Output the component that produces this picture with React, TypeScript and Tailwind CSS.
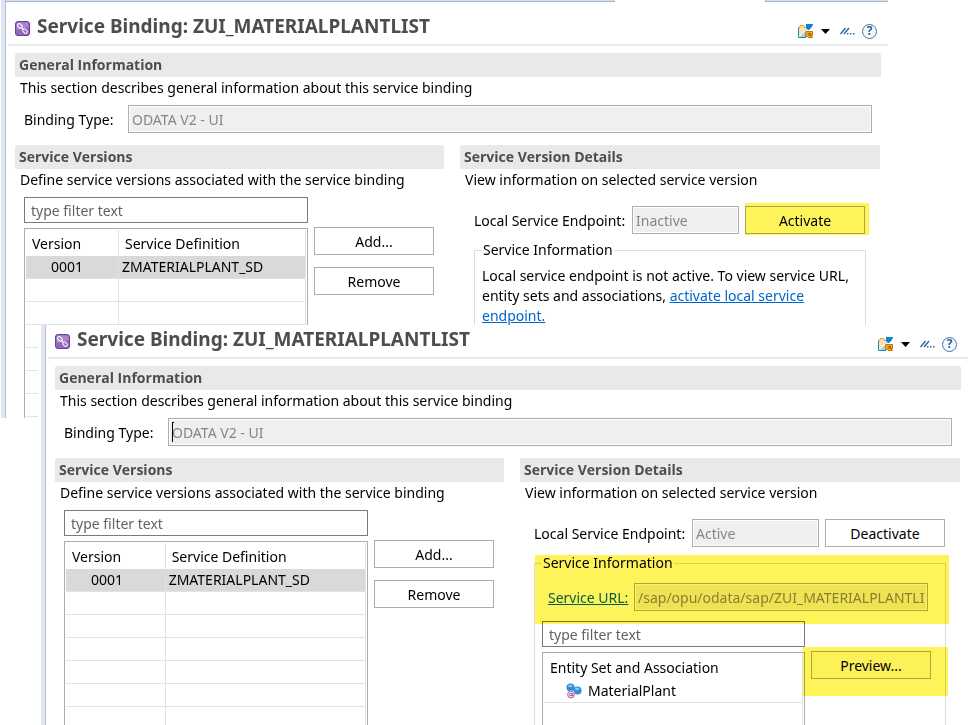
import React, { useId } from 'react';
import { clsx } from 'clsx';

interface ServiceVersion {
  version: string;
  definition: string;
}

interface EditorProps {
  title: string;
  bindingType: string;
  versions: ServiceVersion[];
  status: string;
  action: string;
  highlightAction?: boolean;
  showCaret?: boolean;
  className?: string;
  tabStrip?: boolean;
  children: React.ReactNode;
}

const BindingIcon: React.FC = () => (
  <svg width="15" height="15" viewBox="0 0 15 15" className="mb-1 shrink-0" aria-hidden="true">
    <rect x="0.5" y="0.5" width="14" height="14" rx="2.5" fill="#9268b8" stroke="#6b3f9c" />
    <path d="M1.5 3a1.5 1.5 0 0 1 1.5-1.5h9A1.5 1.5 0 0 1 13.5 3v3L1.5 9z" fill="#ab86cd" />
    <g fill="none" stroke="#fff" strokeWidth="1">
      <rect x="-2.6" y="-1.7" width="5.2" height="3.4" rx="1.7" transform="translate(4.9 5) rotate(45)" />
      <rect x="-2.6" y="-1.7" width="5.2" height="3.4" rx="1.7" transform="translate(10 10.1) rotate(45)" />
      <path d="M5.8 5.9l3.4 3.400" />
    </g>
  </svg>
);

const ShareFolderIcon: React.FC = () => (
  <svg width="15" height="14" viewBox="0 0 15 14" aria-hidden="true">
    <path d="M1 3h1V1.5h5V3h2v10H1z" fill="#fbe3ad" />
    <path d="M1 4V3.5h1v-2h4v2h2" fill="none" stroke="#d9a25c" />
    <path d="M2 13l5-6h2v6z" fill="#a9cdec" />
    <path d="M1.500 12.500L7 7" stroke="#fff" />
    <path d="M0.500 3.500v10H8" fill="none" stroke="#1c86c4" />
    <path d="M8 0h7v1l-1 1v1l-3 3H8z" fill="#0a84cf" />
    <path d="M8 6V4l2 2z" fill="#cfe6f6" />
    <path d="M8 7.500h6.500v4H13l1.500 2h-4l-1-1H7.500v-2H8z" fill="#f3a712" stroke="#bd7708" />
    <path d="M10 9.500h2.500V12M12.500 9.500L10 12" fill="none" stroke="#9a6206" />
  </svg>
);

const LinkEditorIcon: React.FC = () => (
  <svg width="15" height="8" viewBox="0 0 15 8" aria-hidden="true">
    <path d="M0.5 7L5.5 1M4 7l5-6" fill="none" stroke="#2b659b" strokeWidth="1.4" />
    <path d="M7 6h1.500v1.500H7zM10 6h1.500v1.500H10zM13 6h1.500v1.500H13z" fill="#2b659b" />
  </svg>
);

const EntityIcon: React.FC = () => (
  <svg width="16" height="16" viewBox="0 0 16 16" className="shrink-0" aria-hidden="true">
    <circle cx="4.5" cy="4.5" r="4" fill="#2c8fd3" />
    <circle cx="11.5" cy="7.5" r="4" fill="#2c8fd3" />
    <ellipse cx="4.2" cy="3" rx="2.2" ry="1.3" fill="#8cc6ee" />
    <ellipse cx="11.2" cy="6" rx="2.2" ry="1.3" fill="#8cc6ee" />
    <circle cx="5" cy="11.5" r="4" fill="#fff" />
    <circle cx="5" cy="11.5" r="3.4" fill="#f6ecf7" stroke="#a561a8" />
    <circle cx="4.8" cy="11.5" r="1.3" fill="none" stroke="#8e4a96" strokeWidth="0.9" />
    <path d="M6.2 10v2.500h1.500" fill="none" stroke="#8e4a96" strokeWidth="0.9" />
  </svg>
);

const Toolbar: React.FC = () => (
  <div className="mr-[11px] flex h-5 shrink-0 items-center">
    <button type="button" aria-label="Share"><ShareFolderIcon /></button>
    <button type="button" aria-label="Share options" className="ml-2">
      <svg width="9" height="5" viewBox="0 0 9 5" aria-hidden="true"><path d="M0 0h9L4.5 5z" /></svg>
    </button>
    <button type="button" aria-label="Link with editor" className="ml-2.5"><LinkEditorIcon /></button>
    <button
      type="button"
      aria-label="Help"
      className="ml-[7px] flex size-[15px] items-center justify-center rounded-full border border-[#4474a6] bg-[#f4f9fe] text-[12px] font-bold leading-none text-[#2b5f96]"
    >
      ?
    </button>
  </div>
);

const SectionTitle: React.FC<{ children: React.ReactNode }> = ({ children }) => (
  <h2 className="h-6 shrink-0 rounded-t-xs bg-[#e9e9e9] px-1 font-['Open_Sans',sans-serif] font-bold leading-6 text-[#4d4d4d]">
    {children}
  </h2>
);

const PushButton: React.FC<{ label: string; clear?: boolean }> = ({ label, clear }) => (
  <button
    type="button"
    className={clsx('h-7 w-[120px] shrink-0 border border-[#adadad] pt-px', clear ? 'bg-[#fdfdfd]' : 'bg-white')}
  >
    {label}
  </button>
);

const ReadOnlyField: React.FC<{ id: string; value: string }> = ({ id, value }) => (
  <input
    id={id}
    readOnly
    value={value}
    className="h-7 w-full min-w-0 border border-[#abadb3] bg-[#efefef] px-[3px] text-[#868686] shadow-[inset_0_0_0_1px_#fff] outline-none"
  />
);

const FilterField: React.FC<{ label: string }> = ({ label }) => (
  <input
    type="text"
    aria-label={label}
    placeholder="type filter text"
    className="h-[26px] w-full shrink-0 border border-[#7a7a7a] bg-white px-1.5 outline-none placeholder:text-[#636363]"
  />
);

const Highlight: React.FC<{ className: string }> = ({ className }) => (
  <span className={clsx('pointer-events-none absolute bg-[#fff35a] mix-blend-multiply', className)} />
);

const VersionTable: React.FC<{ versions: ServiceVersion[] }> = ({ versions }) => (
  <div className="mt-[5px] min-h-0 flex-1 overflow-hidden border border-b-0 border-[#abadb3] p-px">
    <table className="w-full table-fixed border-separate border-spacing-0 border-r border-[#e2e2e2] text-left">
      <thead>
        <tr className="h-[26px]">
          <th className="w-1/3 border-r border-[#e2e2e2] pb-0 pl-1.5 pt-0.5 font-normal">Version</th>
          <th className="pb-0 pl-1.5 pt-0.5 font-normal">Service Definition</th>
        </tr>
      </thead>
      <tbody>
        {versions.map((v) => (
          <tr key={v.version} className="h-[23px] bg-[#d9d9d9] leading-[22px]">
            <td className="border-b border-r border-[#e2e2e2] pl-[25px]">{v.version}</td>
            <td className="border-b border-[#e2e2e2] pl-[3px]">{v.definition}</td>
          </tr>
        ))}
        {Array.from({ length: 12 }, (_, i) => (
          <tr key={i} className="h-[23px]">
            <td className="border-b border-r border-[#e2e2e2]" />
            <td className="border-b border-[#e2e2e2]" />
          </tr>
        ))}
      </tbody>
    </table>
  </div>
);

const ServiceInformation: React.FC<{ children: React.ReactNode }> = ({ children }) => (
  <fieldset className="mx-3.5 mt-1.5 flex min-h-0 min-w-0 flex-1 flex-col border border-b-0 border-[#dcdcdc] px-[7px]">
    <legend className="px-px leading-5">Service Information</legend>
    {children}
  </fieldset>
);

const BindingEditor: React.FC<EditorProps> = ({
  title, bindingType, versions, status, action, highlightAction, showCaret, className, tabStrip, children,
}) => {
  const id = useId();

  return (
    <section className={clsx('flex overflow-hidden bg-white', className)}>
      <div className="w-[5px] shrink-0 border-r border-[#bcc3cf] bg-[#dfe5f6]" />
      <div className="flex min-w-0 flex-1 flex-col">
        {tabStrip && (
          <div className="mb-2.5 flex h-0.5 shrink-0 gap-[150px]">
            <div className="grow-[5] border-b border-[#a6b4c8] bg-[#d3e0f0]" />
            <div className="grow border-b border-l border-[#a6b4c8] bg-[#d3e0f0]" />
          </div>
        )}
        <header className="ml-0.5 flex h-[34px] shrink-0 items-start border-b-2 border-[#e9e9e9] pl-[7px]">
          <div className="flex h-7 items-end gap-[7px]">
            <BindingIcon />
            <h1 className="whitespace-nowrap text-[19px] font-bold leading-7 text-[#4d4d4d]">{title}</h1>
          </div>
          <div className="ml-auto pt-[9px]"><Toolbar /></div>
        </header>

        <div className="flex min-h-0 flex-1 flex-col pl-[9px] pr-[7px] pt-[7px]">
          <SectionTitle>General Information</SectionTitle>
          <p className="pl-[5px] leading-[22px]">This section describes general information about this service binding</p>
          <div className="mt-1.5 flex items-center pl-[9px] pr-[9px]">
            <label htmlFor={`${id}-type`} className="w-[104px] shrink-0 pt-px">Binding Type:</label>
            <div className="relative flex-1">
              <ReadOnlyField id={`${id}-type`} value={bindingType} />
              {showCaret && <span className="absolute left-1 top-1 h-5 w-0.5 border-l border-t border-black" />}
            </div>
          </div>

          <div className="mr-px mt-3 flex min-h-0 flex-1 gap-4">
            <section className="flex min-w-0 grow basis-[9px] flex-col">
              <SectionTitle>Service Versions</SectionTitle>
              <p className="whitespace-nowrap pl-[5px] leading-[22px]">Define service versions associated with the service binding</p>
              <div className="mt-1.5 flex min-h-0 flex-1 gap-1.5 pl-[9px] pr-2.5">
                <div className="flex min-w-0 flex-1 flex-col">
                  <FilterField label="Filter service versions" />
                  <VersionTable versions={versions} />
                </div>
                <div className="flex flex-col gap-3 pt-[30px]">
                  <PushButton label="Add..." />
                  <PushButton label="Remove" />
                </div>
              </div>
            </section>

            <section className="flex min-w-0 grow basis-0 flex-col">
              <SectionTitle>Service Version Details</SectionTitle>
              <p className="pl-[5px] leading-[22px]">View information on selected service version</p>
              <div className="mt-[15px] flex items-center pl-3.5 pr-[15px]">
                <label htmlFor={`${id}-endpoint`} className="w-[158px] shrink-0 whitespace-nowrap pt-px">Local Service Endpoint:</label>
                <div className="min-w-0 flex-1"><ReadOnlyField id={`${id}-endpoint`} value={status} /></div>
                <div className="relative ml-1.5 flex">
                  <PushButton label={action} />
                  {highlightAction && <Highlight className="-right-1 -top-[3px] left-0 h-8" />}
                </div>
              </div>
              {children}
            </section>
          </div>
        </div>
      </div>
    </section>
  );
};

const versions: ServiceVersion[] = [{ version: '0001', definition: 'ZMATERIALPLANT_SD' }];

export default function App() {
  return (
    <main className="flex h-screen flex-col overflow-hidden bg-white font-['Noto_Sans',sans-serif] text-[14px] leading-5 text-black">
      <BindingEditor
        title="Service Binding: ZUI_MATERIALPLANTLIST"
        bindingType="ODATA V2 - UI"
        versions={versions}
        status="Inactive"
        action="Activate"
        highlightAction
        tabStrip
        className="ml-px mr-20 h-[418px] shrink-0"
      >
        <ServiceInformation>
          <p className="mt-1.5">
            Local service endpoint is not active. To view service URL, entity sets and associations,{' '}
            <a href="#activate" className="text-[#0066cc] underline">activate local service endpoint.</a>
          </p>
        </ServiceInformation>
      </BindingEditor>

      <div className="relative -mt-[93px] ml-[38px] flex min-h-0 flex-1 bg-white pl-[3px]">
        <BindingEditor
          title="Service Binding: ZUI_MATERIALPLANTLIST"
          bindingType="ODATA V2 - UI"
          versions={versions}
          status="Active"
          action="Deactivate"
          showCaret
          className="min-w-0 flex-1"
        >
          <div className="relative flex min-h-0 flex-1 flex-col">
            <ServiceInformation>
              <div className="mt-2.5 flex items-center pl-1.5 pr-2.5">
                <label htmlFor="service-url" className="w-[86px] shrink-0 whitespace-nowrap pt-px">
                  <a href="#service-url" className="text-[#0066cc] underline">Service URL:</a>
                </label>
                <ReadOnlyField id="service-url" value="/sap/opu/odata/sap/ZUI_MATERIALPLANTLIST" />
              </div>
              <div className="mt-2.5 flex min-h-0 flex-1 gap-1.5 pr-[7px]">
                <div className="flex min-w-0 flex-1 flex-col">
                  <FilterField label="Filter entity sets" />
                  <div className="mt-[5px] min-h-0 flex-1 overflow-hidden border border-b-0 border-[#abadb3] p-px">
                    <table className="w-full border-separate border-spacing-0 border-r border-[#e2e2e2] text-left">
                      <thead>
                        <tr className="h-[26px]">
                          <th className="pb-0 pl-1.5 pt-0.5 font-normal">Entity Set and Association</th>
                        </tr>
                      </thead>
                      <tbody>
                        <tr className="h-[23px]">
                          <td className="border-b border-[#e2e2e2] pl-[22px] leading-[22px]">
                            <span className="flex items-center gap-1.5"><EntityIcon />MaterialPlant</span>
                          </td>
                        </tr>
                        <tr className="h-[23px]"><td /></tr>
                      </tbody>
                    </table>
                  </div>
                </div>
                <div className="pt-[30px]">
                  <div className="relative flex">
                    <PushButton label="Preview..." clear />
                    <Highlight className="-left-2 -top-1 h-[49px] w-[145px]" />
                  </div>
                </div>
              </div>
            </ServiceInformation>
            <Highlight className="left-[15px] right-[11px] top-2 h-[69px]" />
          </div>
        </BindingEditor>
      </div>
    </main>
  );
}
